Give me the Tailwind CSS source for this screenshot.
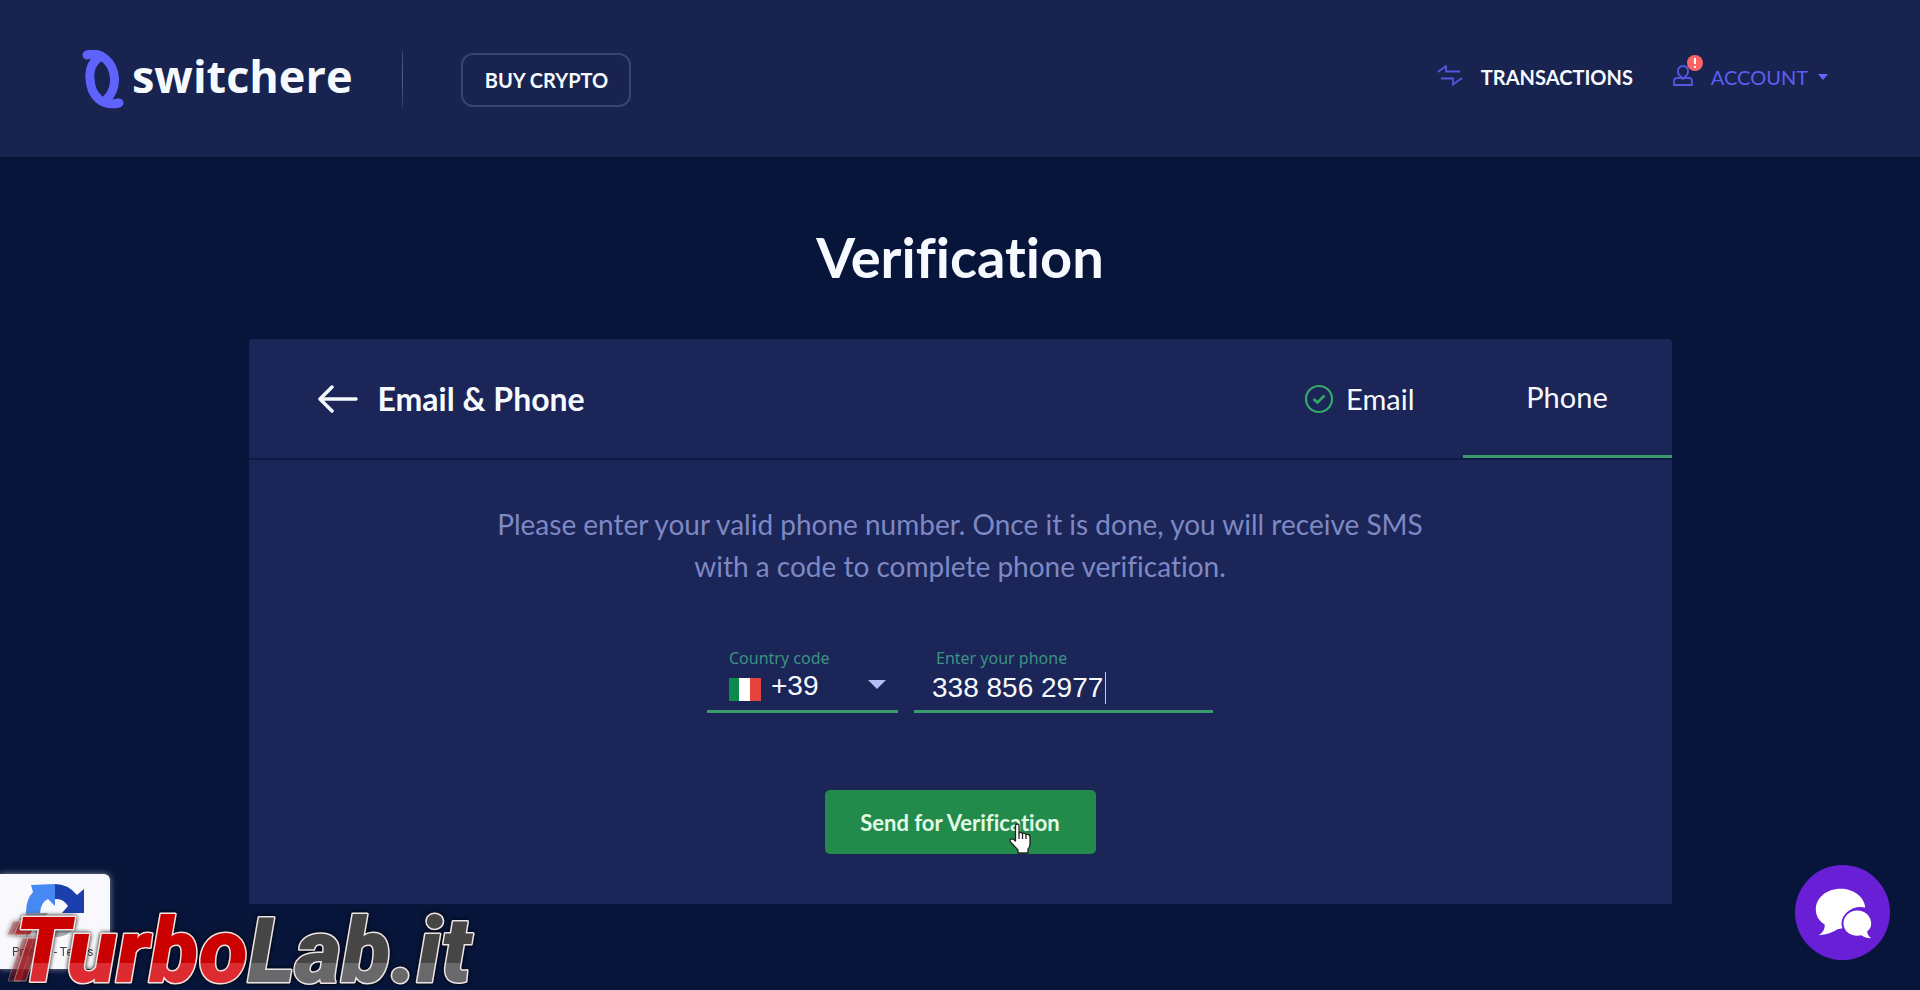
<!DOCTYPE html>
<html lang="en">
<head>
<meta charset="utf-8">
<meta name="viewport" content="width=device-width, initial-scale=1">
<title>Verification - switchere</title>
<script src="https://cdn.jsdelivr.net/npm/@tailwindcss/browser@4"></script>
</head>
<body class="min-h-screen overflow-x-hidden bg-[#07153a] font-['Lato',sans-serif] text-[#f6faff] [font-variant-ligatures:none]">

<header class="flex items-start justify-between bg-[#18234f] pt-[50px] pr-[92px] pb-12 pl-[82px]">
  <div class="flex items-center">
    <a href="#" class="flex items-center gap-2" aria-label="switchere home">
      <svg class="h-[59px] w-[42px]" viewBox="0 0 42 59" fill="none" stroke="#5f62fb" stroke-width="9" stroke-linecap="round" aria-hidden="true">
        <path d="M5 5C18 1 31 11 32.500 28C33 38 29 45 24 50"/>
        <path d="M16 8C10 13 7 20 8 29C9 46 20 57 37 53"/>
      </svg>
      <span class="-mt-2 font-['Open_Sans',sans-serif] text-[45px] leading-[59px] font-bold">switchere</span>
    </a>
    <span class="ml-[50px] h-[58px] w-px bg-linear-to-b from-[#3a4575] via-[#56618f] to-[#2a3563]"></span>
    <button type="button" class="ml-[58px] h-[54px] w-[170px] rounded-xl border-2 border-[#384372] text-xl font-bold">BUY CRYPTO</button>
  </div>
  <nav class="flex items-center pt-3" aria-label="Main">
    <a href="#" class="flex items-center gap-[17px] text-xl leading-[30px] font-bold">
      <svg class="h-6 w-7" viewBox="0 0 28 24" fill="none" stroke="#5357e0" stroke-width="1.800" aria-hidden="true"><path d="M2 7L10 1V6.500H24M5 13.500H17V19.500L26 13"/></svg>
      TRANSACTIONS
    </a>
    <a href="#" class="ml-10 flex items-center gap-[18px] text-xl leading-[30px] text-[#5d5ff0]">
      <span class="relative">
        <svg class="h-6 w-5" viewBox="0 0 20 24" fill="none" stroke="#5357e0" stroke-width="1.800" aria-hidden="true"><path d="M1 20V16Q1 13 4 13H16Q19 13 19 16V20Z"/><path d="M10 1Q15 1 15 6.500Q15 10 12 11.500L10 14L8 11.500Q5 10 5 6.500Q5 1 10 1Z" fill="#18234f"/></svg>
        <svg class="absolute -top-2.5 left-3.5 h-4 w-4" viewBox="0 0 16 16" aria-hidden="true"><circle cx="8" cy="8" r="8" fill="#fb6564"/><path d="M8 3V9M8 11V13" stroke="#fff" stroke-width="2"/></svg>
      </span>
      <span class="flex items-center gap-2.5">ACCOUNT
      <svg class="h-1.5 w-2.5" viewBox="0 0 10 6" fill="#6568fb" aria-hidden="true"><path d="M0 0H10L5 6Z"/></svg></span>
    </a>
  </nav>
</header>

<main class="mx-auto w-full max-w-[1423px] pt-[65px]">
  <h1 class="text-center text-[56px] leading-[70px] font-bold">Verification</h1>

  <section class="mt-[47px] rounded-t bg-[#1b2557]">
    <div class="flex items-stretch justify-between border-b-2 border-[#0f1a45] pl-[69px]">
      <a href="#" class="flex items-center gap-5 text-[32px] font-bold">
        <svg class="h-7 w-10" viewBox="0 0 40 28" fill="none" stroke="currentColor" stroke-width="3.500" stroke-linecap="round" stroke-linejoin="round" aria-hidden="true"><path d="M38 14H2M14 2L2 14L14 26"/></svg>
        Email &amp; Phone
      </a>
      <div class="flex text-[29px]">
        <button type="button" class="flex items-center gap-3 px-12">
          <svg class="h-[30px] w-[30px]" viewBox="0 0 30 30" fill="none" stroke="#35a86a" stroke-width="2.200" aria-hidden="true"><circle cx="15" cy="15" r="13"/><path d="M9.500 15L13.500 18.500L20.500 11.500" stroke-width="2.600"/></svg>
          Email
        </button>
        <button type="button" class="h-[119px] w-[209px] border-b-3 border-[#3a9a6c]">Phone</button>
      </div>
    </div>

    <form class="flex flex-col items-center px-8 pt-[43px] pb-[50px]">
      <p class="max-w-[940px] text-center text-[28px] leading-[42px] text-[#7d88c4]">Please enter your valid phone number. Once it is done, you will receive SMS with a code to complete phone verification.</p>

      <div class="mt-[59px] flex gap-4">
        <div class="w-[191px] border-b-3 border-[#3a9a6c]">
          <label for="code" class="block pl-[22px] font-['Noto_Sans',sans-serif] text-base leading-6 text-[#3b9384]">Country code</label>
          <div class="relative">
            <select id="code" class="block h-10 w-full appearance-none pb-2 pl-16 font-['Liberation_Sans',sans-serif] text-[28px] leading-8 outline-none"><option>+39</option></select>
            <svg class="pointer-events-none absolute top-2 left-[22px] h-[23px] w-8" viewBox="0 0 32 23" aria-hidden="true"><path fill="#0c8a4b" d="M0 0H10V23H0Z"/><path fill="#fff" d="M10 0H21V23H10Z"/><path fill="#e5443c" d="M21 0H32V23H21Z"/></svg>
            <svg class="pointer-events-none absolute top-2.5 right-3 h-[9px] w-[18px]" viewBox="0 0 18 9" fill="#b4bdf5" aria-hidden="true"><path d="M0 0H18L9 9Z"/></svg>
          </div>
        </div>
        <div class="w-[299px] border-b-3 border-[#3a9a6c]">
          <label for="phone" class="block pl-[22px] font-['Noto_Sans',sans-serif] text-base leading-6 text-[#3b9384]">Enter your phone</label>
          <div class="relative">
            <input id="phone" type="tel" value="338 856 2977" class="block h-10 w-full pb-1 pl-[18px] font-['Liberation_Sans',sans-serif] text-[28px] outline-none">
            <span class="absolute top-0.5 left-[191px] h-8 w-px bg-[#c3cbf5]"></span>
          </div>
        </div>
      </div>

      <button type="submit" class="relative mt-[77px] h-16 w-[271px] rounded-[5px] bg-[#228b4b] text-[22px] font-bold text-[#e3fbe6]">Send for Verification
        <svg class="absolute top-[33px] left-[184px] h-[31px] w-[22px]" viewBox="0 0 22 31" fill="#fff" stroke="#222" stroke-width="1.300" stroke-linejoin="round" aria-hidden="true"><path d="M6.500 18V3Q6.500 1 8.250 1T10 3V10Q12 8.500 13.500 10.500Q15.500 9.500 17 11.500Q20.500 10.500 21 14V21Q21 24 19 26V30H9V27L2 19.500Q0 17 2 16Q4 15.500 6.500 18Z"/><path d="M10 10V16M13.500 10.500V16M17 11.500V16" fill="none"/></svg>
      </button>
    </form>
  </section>
</main>

<!-- reCAPTCHA badge -->
<aside class="fixed bottom-[21px] left-0 h-[95px] w-[110px] rounded-r-md bg-[#f9f9fd] pl-3 shadow-[0_0_6px_#8b91a5]">
  <svg class="mt-2 ml-3 h-[58px] w-[62px]" viewBox="0 0 62 58" aria-hidden="true">
    <path fill="#4689f2" d="M31 2V24L24 17Q17 20 16 31H2Q2 17 9 10L7 3Z"/>
    <path fill="#1b40ad" d="M31 2Q44 2 53 13L60 7V31H38L44 24Q39 16 31 17Z"/>
    <path fill="#aaaeb7" d="M2 31H24L18 38Q30 50 41 36L51 46Q33 64 12 46L2 55Z"/>
  </svg>
  <p class="mt-1 font-['Roboto',sans-serif] text-xs whitespace-nowrap text-[#444]">Privacy - Terms</p>
</aside>

<!-- Channel watermark -->
<svg class="pointer-events-none fixed bottom-0 left-0 h-[80px] w-[490px] drop-shadow-[0_0_2px_#000]" viewBox="0 0 490 80" role="img" aria-label="TurboLab.it">
  <defs>
    <linearGradient id="red" gradientUnits="userSpaceOnUse" x1="0" y1="0" x2="0" y2="80"><stop offset=".66" stop-color="#cb0000"/><stop offset=".66" stop-color="#dc2c32"/></linearGradient>
    <linearGradient id="gray" gradientUnits="userSpaceOnUse" x1="0" y1="0" x2="0" y2="80"><stop offset=".66" stop-color="#464646"/><stop offset=".66" stop-color="#69696b"/></linearGradient>
  </defs>
  <g fill="#c81d24" stroke="#e9cdd2" stroke-width="1">
    <path opacity=".35" d="M13 11H30L25 25H7ZM22 28H34L20 71H8Z"/>
    <path opacity=".55" d="M20 11H36L31 25H14ZM28 28H40L26 71H14Z"/>
  </g>
  <text x="15" y="72" font-family="Roboto, sans-serif" font-size="90" font-weight="900" font-style="italic" stroke-linejoin="round" stroke="#eee3e5" stroke-width="3" paint-order="stroke"><tspan fill="url(#red)">Turbo</tspan><tspan fill="url(#gray)">Lab.it</tspan></text>
</svg>

<!-- Chat launcher -->
<button type="button" aria-label="Open chat" class="fixed right-[30px] bottom-[30px] h-[95px] w-[95px] rounded-full bg-[#691fd5]">
  <svg class="h-full w-full" viewBox="0 0 96 96" aria-hidden="true">
    <path fill="#fff" d="M46 24C59 24 70 32 71 43C59 40 47 49 47 59Q47 62 48 64L43 65Q36 70 24 71Q31 66 30 60Q21 55 21 45C21 33 32 24 46 24Z"/>
    <path fill="#fff" d="M63 46C71 46 77 52 77 59Q77 64 73 67Q73 71 77 74Q71 74 67 71C57 73 49 67 49 59C49 52 55 46 63 46Z"/>
  </svg>
</button>
</body>
</html>
